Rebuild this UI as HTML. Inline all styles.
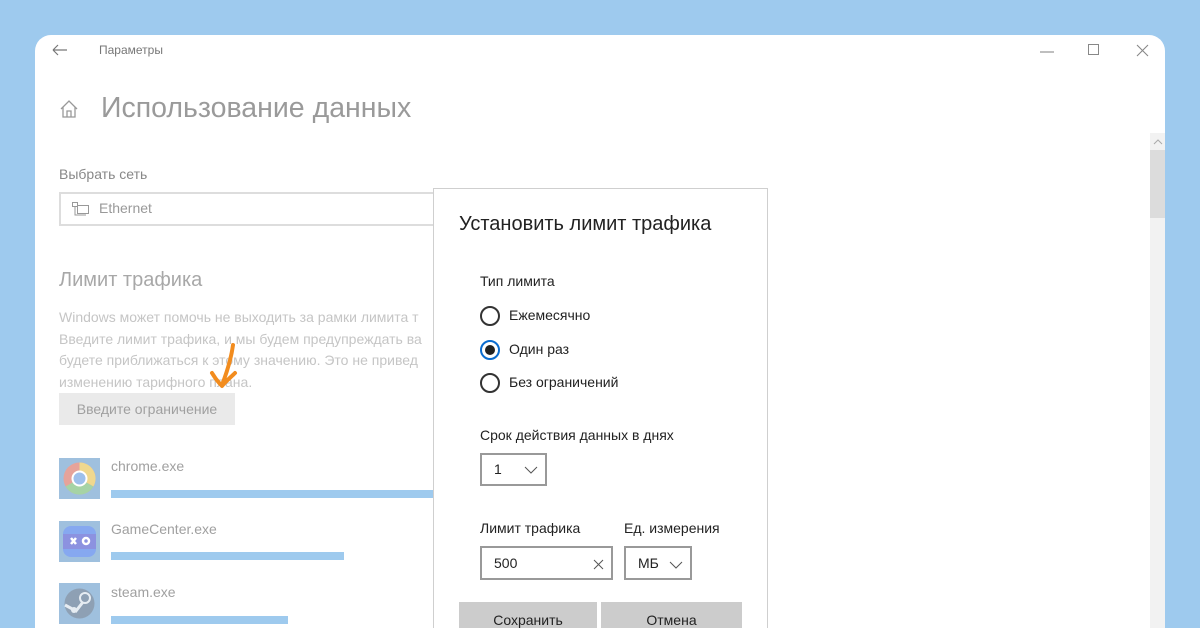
<!DOCTYPE html>
<html><head><meta charset="utf-8"><style>
*{margin:0;padding:0;box-sizing:border-box}
html,body{width:1200px;height:628px;overflow:hidden}
body{background:#9ecaee;position:relative;font-family:"Liberation Sans","DejaVu Sans",sans-serif}
.win{position:absolute;left:35px;top:35px;width:1130px;height:593px;background:#fff;border-radius:16px 16px 0 0;overflow:hidden}
.t{position:absolute;white-space:nowrap}
.g{color:#a8a8a8}
</style></head><body>
<div class="win">
 <svg class="t" style="left:17px;top:9px" width="16" height="12"><path d="M1 6H15M1 6L6 1M1 6L6 11" stroke="#777" stroke-width="1.2" fill="none"/></svg>
 <div class="t" style="left:64px;top:8px;font-size:12px;color:#777">Параметры</div>
 <svg class="t" style="left:1005px;top:15px" width="16" height="4"><path d="M0 2H14" stroke="#999" stroke-width="1.2"/></svg>
 <svg class="t" style="left:1053px;top:9px" width="12" height="12"><rect x="0.5" y="0.5" width="10" height="10" stroke="#888" fill="none"/></svg>
 <svg class="t" style="left:1101px;top:9px" width="13" height="13"><path d="M1 1L12 12M12 1L1 12" stroke="#888" stroke-width="1.1"/></svg>
 <svg class="t" style="left:24px;top:64px" width="20" height="20"><path d="M2 10L10 2L18 10M4 8V18H16V8M8 18V12H12V18" stroke="#999" stroke-width="1.3" fill="none"/></svg>
 <div class="t g" style="left:66px;top:57px;font-size:28.5px;color:#9a9a9a">Использование данных</div>
 <div class="t" style="left:24px;top:131px;font-size:14px;color:#888">Выбрать сеть</div>
 <div class="t" style="left:24px;top:157px;width:380px;height:34px;border:2px solid #ddd"></div>
 <svg class="t" style="left:37px;top:167px" width="18" height="15"><rect x="0.5" y="0.5" width="5" height="4" fill="none" stroke="#999"/><rect x="5.5" y="3.5" width="11" height="8" fill="none" stroke="#999"/><path d="M3 5V13H14" stroke="#999" fill="none"/></svg>
 <div class="t" style="left:64px;top:165px;font-size:14px;color:#999">Ethernet</div>
 <div class="t" style="left:24px;top:234px;font-size:20px;color:#a8a8a8">Лимит трафика</div>
 <div class="t" style="left:24px;top:272px;font-size:14px;line-height:21.5px;color:#c5c5c5">Windows может помочь не выходить за рамки лимита т<br>Введите лимит трафика, и мы будем предупреждать ва<br>будете приближаться к этому значению. Это не привед<br>изменению тарифного плана.</div>
 <div class="t" style="left:24px;top:358px;width:176px;height:32px;background:#eaeaea;font-size:14px;color:#a0a0a0;line-height:32px;text-align:center">Введите ограничение</div>
 <div class="t" style="left:24px;top:423px;width:41px;height:41px;background:#9fc0de"><svg width="41" height="41"><circle cx="20.5" cy="20.5" r="16" fill="#e6a39a"/><path d="M20.5 4.5A16 16 0 0 1 34.4 28.5L20.5 20.5Z" fill="#f0d88e"/><path d="M34.4 28.5A16 16 0 0 1 6.6 28.5L20.5 20.5Z" fill="#a6d3a5"/><circle cx="20.5" cy="20.5" r="8" fill="#fff"/><circle cx="20.5" cy="20.5" r="6" fill="#9ec0ec"/></svg></div>
 <div class="t" style="left:76px;top:423px;font-size:14px;color:#a0a0a0">chrome.exe</div>
 <div class="t" style="left:76px;top:455px;width:325px;height:8px;background:#9ecaee"></div>
 <div class="t" style="left:24px;top:486px;width:41px;height:41px;background:#9fc0de"><svg width="41" height="41"><rect x="4" y="5" width="33" height="31" rx="8" fill="#86a8f0"/><rect x="4" y="13" width="33" height="15" fill="#8c92e0"/><path d="M12 17L17 23M17 17L12 23" stroke="#fff" stroke-width="2.5"/><circle cx="27" cy="20" r="3" fill="none" stroke="#fff" stroke-width="2.5"/></svg></div>
 <div class="t" style="left:76px;top:486px;font-size:14px;color:#a0a0a0">GameCenter.exe</div>
 <div class="t" style="left:76px;top:517px;width:233px;height:8px;background:#9ecaee"></div>
 <div class="t" style="left:24px;top:548px;width:41px;height:41px;background:#9fc0de"><svg width="41" height="41"><circle cx="20.5" cy="20.5" r="15" fill="#8ea0b4"/><circle cx="26" cy="15" r="5" fill="none" stroke="#e6ecf2" stroke-width="2"/><path d="M6 22L17 28L24 19" stroke="#e6ecf2" stroke-width="3" fill="none"/><circle cx="15" cy="27" r="3" fill="#e6ecf2"/></svg></div>
 <div class="t" style="left:76px;top:549px;font-size:14px;color:#a0a0a0">steam.exe</div>
 <div class="t" style="left:76px;top:581px;width:177px;height:8px;background:#9ecaee"></div>
 <div class="t" style="left:1115px;top:98px;width:15px;height:500px;background:#f2f2f2"></div>
 <div class="t" style="left:1115px;top:115px;width:15px;height:68px;background:#dcdcdc"></div>
 <svg class="t" style="left:1118px;top:104px" width="10" height="6"><path d="M1 5L5 1L9 5" stroke="#aaa" fill="none"/></svg>
</div>
<svg class="t" style="left:205px;top:340px;position:absolute" width="40" height="55"><path d="M28 5C26 20 22 32 17 45M7 33C10 38 14 43 17 46C20 42 26 37 30 33" stroke="#f28c1e" stroke-width="4" fill="none" stroke-linecap="round" stroke-linejoin="round"/></svg>
<div style="position:absolute;left:433px;top:188px;width:335px;height:440px;background:#fff;border:1px solid #cfcfcf;border-bottom:none;overflow:hidden">
 <div class="t" style="left:25px;top:24px;font-size:20px;color:#222">Установить лимит трафика</div>
 <div class="t" style="left:46px;top:84px;font-size:14px;color:#222">Тип лимита</div>
 <div class="t" style="left:46px;top:117px;width:20px;height:20px;border:2px solid #333;border-radius:50%"></div>
 <div class="t" style="left:75px;top:118px;font-size:14px;color:#222">Ежемесячно</div>
 <div class="t" style="left:46px;top:151px;width:20px;height:20px;border:2px solid #0a6cd0;border-radius:50%"><div style="margin:3px;width:10px;height:10px;background:#222;border-radius:50%"></div></div>
 <div class="t" style="left:75px;top:152px;font-size:14px;color:#222">Один раз</div>
 <div class="t" style="left:46px;top:184px;width:20px;height:20px;border:2px solid #333;border-radius:50%"></div>
 <div class="t" style="left:75px;top:185px;font-size:14px;color:#222">Без ограничений</div>
 <div class="t" style="left:46px;top:238px;font-size:14px;color:#222">Срок действия данных в днях</div>
 <div class="t" style="left:46px;top:264px;width:67px;height:33px;border:2px solid #999;font-size:14px;color:#222;padding:6px 0 0 12px">1</div>
 <svg class="t" style="left:90px;top:277px" width="14" height="8"><path d="M1 1L7 7L13 1" stroke="#555" fill="none"/></svg>
 <div class="t" style="left:46px;top:331px;font-size:14px;color:#222">Лимит трафика</div>
 <div class="t" style="left:190px;top:331px;font-size:14px;color:#222">Ед. измерения</div>
 <div class="t" style="left:46px;top:357px;width:133px;height:34px;border:2px solid #999;font-size:14px;color:#222;padding:7px 0 0 12px">500</div>
 <svg class="t" style="left:159px;top:370px" width="11" height="11"><path d="M1 1L10 10M10 1L1 10" stroke="#555"/></svg>
 <div class="t" style="left:190px;top:357px;width:68px;height:34px;border:2px solid #999;font-size:14px;color:#222;padding:7px 0 0 12px">МБ</div>
 <svg class="t" style="left:235px;top:372px" width="14" height="8"><path d="M1 1L7 7L13 1" stroke="#555" fill="none"/></svg>
 <div class="t" style="left:25px;top:413px;width:138px;height:40px;background:#cccccc;font-size:14px;color:#222;text-align:center;line-height:36px">Сохранить</div>
 <div class="t" style="left:167px;top:413px;width:141px;height:40px;background:#cccccc;font-size:14px;color:#222;text-align:center;line-height:36px">Отмена</div>
</div>
</body></html>
